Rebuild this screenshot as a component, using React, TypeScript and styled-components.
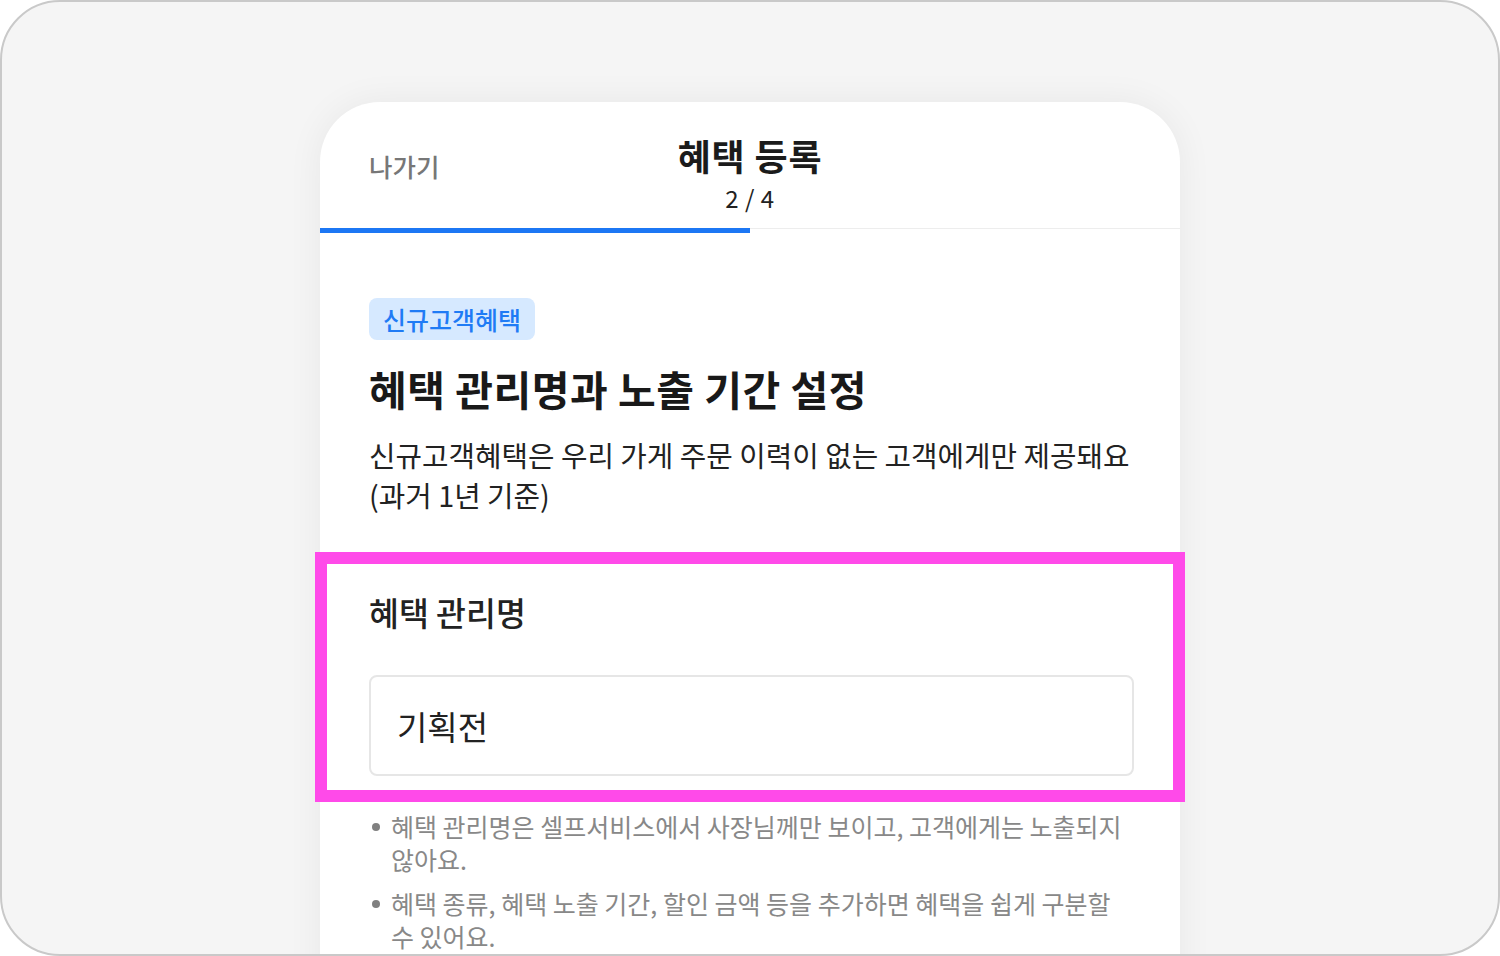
import React from 'react';
import styled, { createGlobalStyle } from 'styled-components';

const GlobalStyle = createGlobalStyle`
  html, body {
    margin: 0;
    padding: 0;
    background: #ffffff;
  }
  body {
    font-family: "Noto Sans CJK KR", "Noto Sans", sans-serif;
    -webkit-font-smoothing: antialiased;
  }
`;

const Frame = styled.div`
  box-sizing: border-box;
  width: 1500px;
  height: 956px;
  padding-top: 100px;
  background: #f5f5f5;
  border: 2px solid #c9c9c9;
  border-radius: 60px;
  overflow: hidden;
  display: flex;
  justify-content: center;
  align-items: flex-start;
`;

const Phone = styled.div`
  width: 860px;
  min-height: 900px;
  background: #ffffff;
  border-radius: 60px 60px 0 0;
  box-shadow: 0 0 36px rgba(0, 0, 0, 0.06);
`;

const Header = styled.header`
  box-sizing: border-box;
  height: 126px;
  padding: 31px 49px 0;
  display: grid;
  grid-template-columns: 1fr auto 1fr;
  align-items: start;
`;

const ExitButton = styled.button`
  justify-self: start;
  margin-top: 17px;
  padding: 0;
  border: none;
  background: none;
  font-family: inherit;
  font-size: 25.5px;
  line-height: 32px;
  font-weight: 500;
  color: #777777;
`;

const TitleBlock = styled.div`
  display: flex;
  flex-direction: column;
  align-items: center;
`;

const Title = styled.h1`
  margin: 0;
  font-size: 36px;
  line-height: 44px;
  font-weight: 600;
  color: #1b1b1b;
  letter-spacing: 0.8px;
`;

const Step = styled.div`
  margin-top: 5px;
  font-size: 24px;
  line-height: 32px;
  color: #222222;
  letter-spacing: 0.5px;
`;

const ProgressTrack = styled.div`
  height: 5px;
  background: linear-gradient(#ededed 0 1px, transparent 1px);
`;

const ProgressFill = styled.div`
  height: 100%;
  background: #1c77f4;
`;

const Content = styled.main`
  padding: 65px 49px 0;
`;

const Badge = styled.span`
  display: inline-flex;
  align-items: center;
  height: 42px;
  padding: 0 14px;
  border-radius: 8px;
  background: #d6e9ff;
  color: #1f7bf5;
  font-size: 25px;
  font-weight: 500;
`;

const Heading = styled.h2`
  margin: 22px 0 0;
  font-size: 41px;
  line-height: 52px;
  font-weight: 700;
  color: #191919;
  letter-spacing: 0.5px;
`;

const Description = styled.p`
  margin: 21px 0 0;
  font-size: 28.8px;
  line-height: 40px;
  color: #222222;
`;

const HighlightSection = styled.section`
  margin: 37px -54px 0;
  padding: 28px 42px 14px;
  border: 12px solid #ff4ae9;
`;

const FieldLabel = styled.label`
  display: block;
  font-size: 32.5px;
  line-height: 40px;
  font-weight: 500;
  color: #222222;
`;

const TextInput = styled.input`
  box-sizing: border-box;
  display: block;
  width: 765px;
  height: 101px;
  margin-top: 43px;
  padding: 0 26px;
  border: 2px solid #e6e6e6;
  border-radius: 8px;
  outline: none;
  font-family: inherit;
  font-size: 33px;
  color: #222222;
  background: #ffffff;
`;

const HelpList = styled.ul`
  margin: 8px 0 0;
  padding: 0;
  list-style: none;
`;

const HelpItem = styled.li`
  display: flex;
  align-items: flex-start;
  gap: 11px;
  font-size: 25px;
  line-height: 33px;
  color: #888888;

  & + & {
    margin-top: 11px;
  }
`;

const Dot = styled.span`
  flex: 0 0 8px;
  width: 8px;
  height: 8px;
  margin: 13px 0 0 3px;
  border-radius: 50%;
  background: #808080;
`;

const helpTexts = [
  '혜택 관리명은 셀프서비스에서 사장님께만 보이고, 고객에게는 노출되지 않아요.',
  '혜택 종류, 혜택 노출 기간, 할인 금액 등을 추가하면 혜택을 쉽게 구분할 수 있어요.',
];

const App = () => {
  const step = 2;
  const total = 4;

  return (
    <>
      <GlobalStyle />
      <Frame>
        <Phone>
          <Header>
            <ExitButton>나가기</ExitButton>
            <TitleBlock>
              <Title>혜택 등록</Title>
              <Step>
                {step} / {total}
              </Step>
            </TitleBlock>
          </Header>
          <ProgressTrack>
            <ProgressFill style={{ width: `${(step / total) * 100}%` }} />
          </ProgressTrack>

          <Content>
            <Badge>신규고객혜택</Badge>
            <Heading>혜택 관리명과 노출 기간 설정</Heading>
            <Description>
              신규고객혜택은 우리 가게 주문 이력이 없는 고객에게만 제공돼요 (과거 1년 기준)
            </Description>

            <HighlightSection>
              <FieldLabel htmlFor="benefit-name">혜택 관리명</FieldLabel>
              <TextInput id="benefit-name" defaultValue="기획전" readOnly />
            </HighlightSection>

            <HelpList>
              {helpTexts.map((text) => (
                <HelpItem key={text}>
                  <Dot />
                  <span>{text}</span>
                </HelpItem>
              ))}
            </HelpList>
          </Content>
        </Phone>
      </Frame>
    </>
  );
};

export default App;
